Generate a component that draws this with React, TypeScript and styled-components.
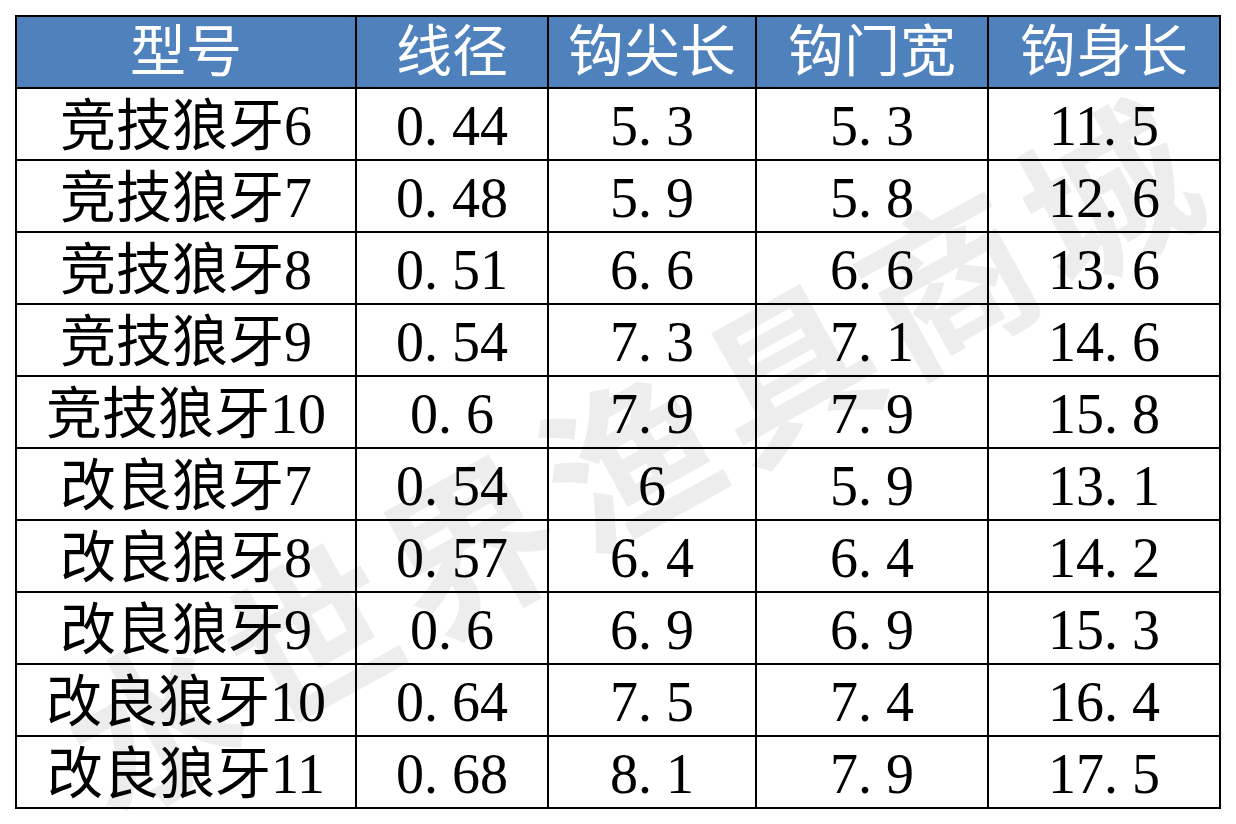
import React from "react";
import styled, { createGlobalStyle } from "styled-components";

const GlobalStyle = createGlobalStyle`
  html, body { margin: 0; padding: 0; background: #ffffff; }
  #root { width: 1236px; height: 824px; }
`;

const Page = styled.div`
  position: relative;
  width: 1236px;
  height: 824px;
  overflow: hidden;
  background: #ffffff;
  padding: 15px 0 0 15px;
  box-sizing: border-box;
`;

const Table = styled.div`
  display: grid;
  grid-template-columns: 338px 190px 206px 230px 230px;
  grid-auto-rows: 70px;
  gap: 2px;
  padding: 2px;
  width: max-content;
  background: #000000;
`;

const Row = styled.div`
  display: contents;
`;

const Cell = styled.div<{ $head?: boolean }>`
  display: flex;
  align-items: center;
  justify-content: center;
  background: ${(p) => (p.$head ? "#4f81bd" : "#ffffff")};
  color: ${(p) => (p.$head ? "#ffffff" : "#000000")};
  font-family: "Liberation Serif", "Noto Sans CJK SC", serif;
  font-size: 56px;
  font-weight: 400;
  line-height: 1;
  white-space: nowrap;
  padding-top: ${(p) => (p.$head ? "0px" : "4px")};
  box-sizing: border-box;
`;

const Dot = styled.span`
  display: inline-block;
  width: 0.5em;
  text-align: left;
`;

const Watermark = styled.div`
  position: absolute;
  left: 632px;
  top: 448px;
  transform: translate(-50%, -50%) rotate(-29deg);
  font-family: "Noto Sans CJK SC", sans-serif;
  font-size: 168px;
  font-weight: 700;
  letter-spacing: 14px;
  color: #ededed;
  white-space: nowrap;
  mix-blend-mode: multiply;
  pointer-events: none;
  line-height: 1;
`;

const headers = ["型号", "线径", "钩尖长", "钩门宽", "钩身长"];

const rows: string[][] = [
  ["竞技狼牙6", "0.44", "5.3", "5.3", "11.5"],
  ["竞技狼牙7", "0.48", "5.9", "5.8", "12.6"],
  ["竞技狼牙8", "0.51", "6.6", "6.6", "13.6"],
  ["竞技狼牙9", "0.54", "7.3", "7.1", "14.6"],
  ["竞技狼牙10", "0.6", "7.9", "7.9", "15.8"],
  ["改良狼牙7", "0.54", "6", "5.9", "13.1"],
  ["改良狼牙8", "0.57", "6.4", "6.4", "14.2"],
  ["改良狼牙9", "0.6", "6.9", "6.9", "15.3"],
  ["改良狼牙10", "0.64", "7.5", "7.4", "16.4"],
  ["改良狼牙11", "0.68", "8.1", "7.9", "17.5"],
];

function Num({ value }: { value: string }) {
  const i = value.indexOf(".");
  if (i < 0) return <>{value}</>;
  return (
    <>
      {value.slice(0, i)}
      <Dot>.</Dot>
      {value.slice(i + 1)}
    </>
  );
}

export default function App() {
  return (
    <>
      <GlobalStyle />
      <Page>
        <Table>
          <Row>
            {headers.map((h) => (
              <Cell key={h} $head>
                {h}
              </Cell>
            ))}
          </Row>
          {rows.map((r) => (
            <Row key={r[0]}>
              {r.map((v, j) => (
                <Cell key={j}>{j === 0 ? v : <Num value={v} />}</Cell>
              ))}
            </Row>
          ))}
        </Table>
        <Watermark>水世界渔具商城</Watermark>
      </Page>
    </>
  );
}
